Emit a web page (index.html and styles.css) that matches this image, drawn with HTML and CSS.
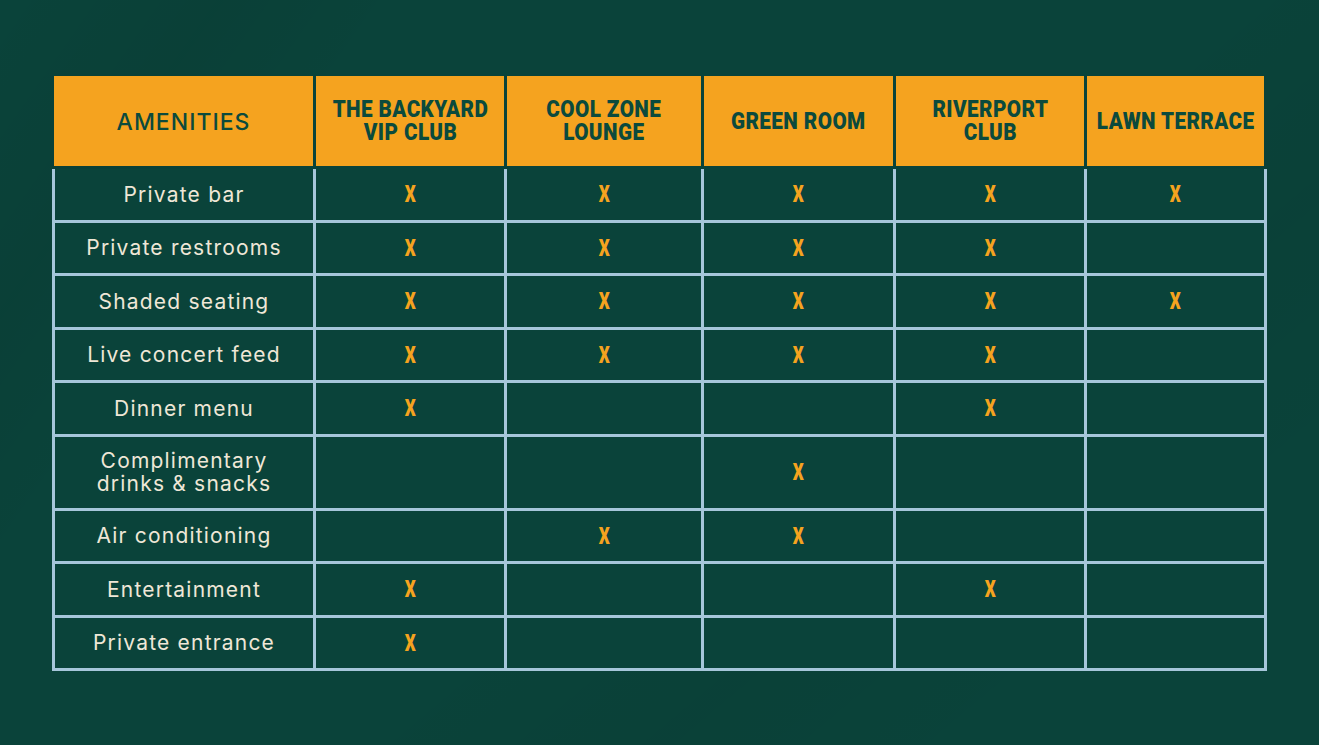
FILE: index.html
```html
<!DOCTYPE html>
<html lang="en">
<head>
<meta charset="utf-8">
<title>Amenities comparison</title>
<link rel="stylesheet" href="styles.css">
</head>
<body>
<main class="page">
  <section class="table">
    <div class="head">
      <div class="hcell hcell-first">AMENITIES</div>
      <div class="hcell"><span class="cond"><span class="ln">THE BACKYARD</span><span class="ln">VIP CLUB</span></span></div>
      <div class="hcell"><span class="cond"><span class="ln">COOL ZONE</span><span class="ln">LOUNGE</span></span></div>
      <div class="hcell"><span class="cond"><span class="ln">GREEN ROOM</span></span></div>
      <div class="hcell"><span class="cond"><span class="ln">RIVERPORT</span><span class="ln">CLUB</span></span></div>
      <div class="hcell"><span class="cond"><span class="ln">LAWN TERRACE</span></span></div>
    </div>
    <div class="body">
      <div class="cell label">Private bar</div>
      <div class="cell"><span class="x">X</span></div><div class="cell"><span class="x">X</span></div><div class="cell"><span class="x">X</span></div><div class="cell"><span class="x">X</span></div><div class="cell"><span class="x">X</span></div>

      <div class="cell label">Private restrooms</div>
      <div class="cell"><span class="x">X</span></div><div class="cell"><span class="x">X</span></div><div class="cell"><span class="x">X</span></div><div class="cell"><span class="x">X</span></div><div class="cell"></div>

      <div class="cell label">Shaded seating</div>
      <div class="cell"><span class="x">X</span></div><div class="cell"><span class="x">X</span></div><div class="cell"><span class="x">X</span></div><div class="cell"><span class="x">X</span></div><div class="cell"><span class="x">X</span></div>

      <div class="cell label">Live concert feed</div>
      <div class="cell"><span class="x">X</span></div><div class="cell"><span class="x">X</span></div><div class="cell"><span class="x">X</span></div><div class="cell"><span class="x">X</span></div><div class="cell"></div>

      <div class="cell label">Dinner menu</div>
      <div class="cell"><span class="x">X</span></div><div class="cell"></div><div class="cell"></div><div class="cell"><span class="x">X</span></div><div class="cell"></div>

      <div class="cell label"><span class="ln">Complimentary</span><span class="ln">drinks &amp; snacks</span></div>
      <div class="cell"></div><div class="cell"></div><div class="cell"><span class="x">X</span></div><div class="cell"></div><div class="cell"></div>

      <div class="cell label">Air conditioning</div>
      <div class="cell"></div><div class="cell"><span class="x">X</span></div><div class="cell"><span class="x">X</span></div><div class="cell"></div><div class="cell"></div>

      <div class="cell label">Entertainment</div>
      <div class="cell"><span class="x">X</span></div><div class="cell"></div><div class="cell"></div><div class="cell"><span class="x">X</span></div><div class="cell"></div>

      <div class="cell label">Private entrance</div>
      <div class="cell"><span class="x">X</span></div><div class="cell"></div><div class="cell"></div><div class="cell"></div><div class="cell"></div>
    </div>
  </section>
</main>
</body>
</html>
```

FILE: styles.css
```css
* { box-sizing: border-box; }

html, body {
  margin: 0;
  padding: 0;
  width: 1319px;
  height: 745px;
  overflow: hidden;
}

body {
  background-color: #0a433a;
  background-image:
    linear-gradient(125deg, rgba(0,0,0,0) 0%, rgba(0,0,0,0.05) 12%, rgba(0,0,0,0) 22%),
    linear-gradient(140deg, rgba(0,0,0,0) 55%, rgba(0,0,0,0.04) 70%, rgba(0,0,0,0) 85%);
}

.page {
  padding: 76px 0 0 52px;
}

.table {
  width: 1215px;
}

.head,
.body {
  display: grid;
  grid-template-columns: 258px 188px 194px 189px 188px 177px;
  column-gap: 3px;
  padding: 0 3px;
}

.head {
  height: 90px;
  margin-bottom: 3px;
}

.hcell {
  background: #f5a31f;
  color: #0b4a3d;
  display: flex;
  align-items: center;
  justify-content: center;
  text-align: center;
  white-space: nowrap;
}

.ln {
  display: block;
}

.cond {
  display: inline-flex;
  flex-direction: column;
  align-items: center;
  font-family: Roboto, "Liberation Sans", Arial, sans-serif;
  font-weight: 900;
  font-size: 24px;
  line-height: 23px;
  letter-spacing: 0.5px;
  transform: scaleX(0.86);
}

.hcell-first {
  margin-left: -1px;
  font-family: Inter, "Liberation Sans", sans-serif;
  font-weight: 500;
  font-size: 23px;
  letter-spacing: 1px;
  padding-top: 2px;
}

.body {
  background: #a6c6da;
  row-gap: 3px;
  padding-bottom: 3px;
  grid-template-rows: repeat(5, 50.5px) 71px repeat(3, 50.5px);
}

.cell {
  background: #0a433a;
  display: flex;
  align-items: center;
  justify-content: center;
  text-align: center;
}

.label {
  flex-direction: column;
  color: #efe7d7;
  font-family: Inter, "Liberation Sans", sans-serif;
  font-size: 21px;
  line-height: 23px;
  letter-spacing: 1.2px;
  white-space: nowrap;
}

.x {
  display: inline-block;
  color: #f5a31f;
  font-family: Roboto, "Liberation Sans", Arial, sans-serif;
  font-weight: 900;
  font-size: 23px;
  transform: scaleX(0.75);
  padding-top: 1px;
}
```
